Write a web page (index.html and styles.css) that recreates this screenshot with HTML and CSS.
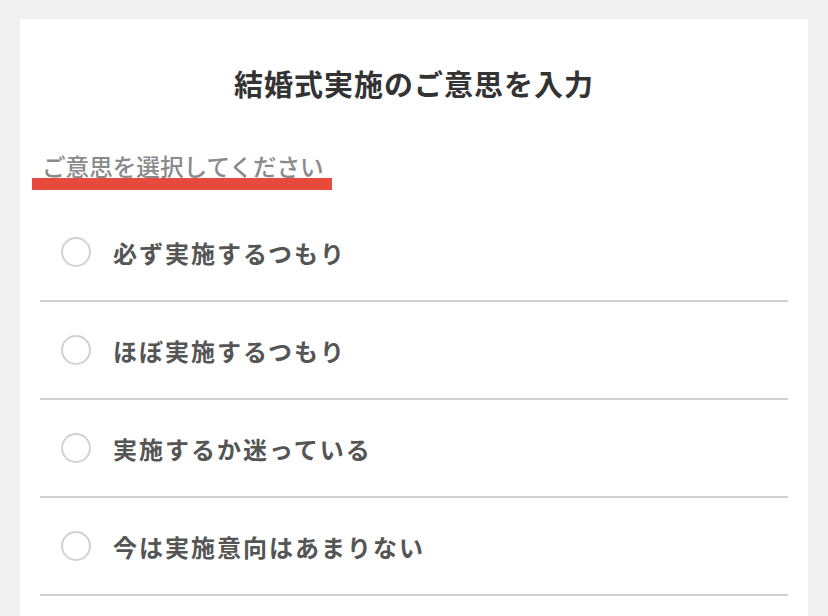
FILE: index.html
```html
<!DOCTYPE html>
<html lang="ja">
<head>
<meta charset="utf-8">
<link rel="stylesheet" href="styles.css">
</head>
<body>
<div class="card">
  <h1 class="title">結婚式実施のご意思を入力</h1>
  <div class="sub"><span class="sub-text">ご意思を選択してください</span></div>
  <ul class="options">
    <li class="option"><span class="radio"></span><span class="label">必ず実施するつもり</span></li>
    <li class="option"><span class="radio"></span><span class="label">ほぼ実施するつもり</span></li>
    <li class="option"><span class="radio"></span><span class="label">実施するか迷っている</span></li>
    <li class="option"><span class="radio"></span><span class="label">今は実施意向はあまりない</span></li>
  </ul>
</div>
</body>
</html>
```
FILE: styles.css
```css
html, body {
  margin: 0;
  padding: 0;
  background: #f0f0f0;
  font-family: "Noto Sans CJK JP", "Noto Sans", sans-serif;
}
.card {
  margin: 19px 0 0 20px;
  width: 788px;
  height: 597px;
  overflow: hidden;
  background: #fff;
  padding: 44px 20px 0 20px;
  box-sizing: border-box;
}
.title {
  margin: 0;
  font-size: 29px;
  line-height: 40px;
  font-weight: 700;
  color: #333;
  text-align: center;
  letter-spacing: 1px;
}
.sub {
  margin: 51px 0 0 -8px;
}
.sub-text {
  display: inline-block;
  font-size: 23.6px;
  line-height: 24px;
  font-weight: 500;
  color: #8a8a8a;
  padding: 0 8px 0 10px;
  border-bottom: 12px solid #e8493d;
}
.options {
  list-style: none;
  margin: 14px 0 0 0;
  padding: 0;
}
.option {
  display: flex;
  align-items: center;
  height: 96px;
  border-bottom: 2px solid #d0d0d0;
  padding-left: 21px;
  gap: 22px;
}
.radio {
  width: 30px;
  height: 30px;
  box-sizing: border-box;
  border: 2px solid #d2d2d2;
  border-radius: 50%;
  flex: none;
}
.label {
  font-size: 24px;
  font-weight: 700;
  color: #555;
  letter-spacing: 2px;
}
```
